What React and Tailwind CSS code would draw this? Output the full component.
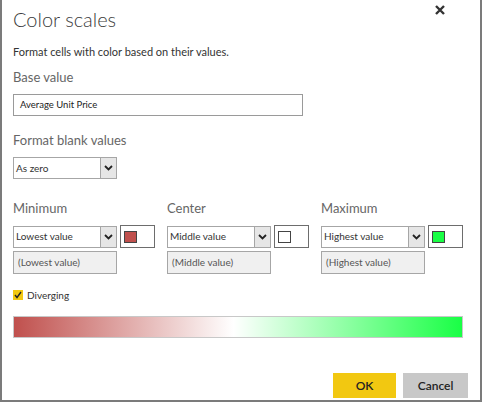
import React from "react";

const font = { fontFamily: 'Lato, "Open Sans", sans-serif' };

const Chevron = () => (
  <svg width="9" height="6" viewBox="0 0 9 6">
    <path d="M1 1 L4.5 4.5 L8 1" fill="none" stroke="#222" strokeWidth="1.8" />
  </svg>
);

const Select = ({ value }) => (
  <div className="flex h-[22px] w-[104px] items-stretch border border-[#a6a6a6] bg-white">
    <div className="flex flex-1 items-center pl-[2px] text-[10px] text-[#333]">{value}</div>
    <div className="flex w-[16px] items-center justify-center border-l border-[#a6a6a6] bg-[#e6e6e6]">
      <Chevron />
    </div>
  </div>
);

const Swatch = ({ color }) => (
  <div className="flex h-[23px] w-[35px] items-center border-[1.5px] border-[#6d6d6d] bg-white pl-[3px]">
    <div className="h-[12px] w-[13px] border border-[#444]" style={{ background: color }} />
  </div>
);

const Column = ({ label, value, color }) => (
  <div className="flex w-[154px] shrink-0 flex-col">
    <div className="h-[18px] text-[13px] leading-[18px] text-[#666]">{label}</div>
    <div className="mt-[8px] flex items-center gap-[3px]">
      <Select value={value} />
      <Swatch color={color} />
    </div>
    <div className="mt-[3px] flex h-[23px] w-[104px] items-center border border-[#a6a6a6] bg-[#f0f0f0] pl-[4px] text-[10px] text-[#555]">
      ({value})
    </div>
  </div>
);

export default function App() {
  return (
    <div style={font} className="flex h-[402px] w-[482px] flex-col border-b-2 border-l-2 border-r-2 border-[#7b7b7b] bg-white pl-[11px] pr-[8px]">
      <div className="flex items-start justify-between">
        <div className="mt-[5px] h-[28px] text-[20px] font-light leading-[28px] text-[#3a3a3a]">Color scales</div>
        <svg className="mt-[5px] mr-[27px]" width="10" height="10" viewBox="0 0 10 10">
          <path d="M1 1 L9 9 M9 1 L1 9" stroke="#333" strokeWidth="2.4" />
        </svg>
      </div>
      <div className="mt-[11px] h-[16px] text-[11px] leading-[16px] text-[#333]">Format cells with color based on their values.</div>
      <div className="mt-[8px] h-[18px] text-[13px] leading-[18px] text-[#666]">Base value</div>
      <div className="mt-[8px] flex h-[22px] w-[290px] items-center border border-[#9a9a9a] pl-[6px] text-[9.5px] text-[#222]">
        Average Unit Price
      </div>
      <div className="mt-[15px] h-[18px] text-[13px] leading-[18px] text-[#666]">Format blank values</div>
      <div className="mt-[8px]">
        <Select value="As zero" />
      </div>
      <div className="mt-[20px] flex">
        <Column label="Minimum" value="Lowest value" color="#c0504d" />
        <Column label="Center" value="Middle value" color="#ffffff" />
        <Column label="Maximum" value="Highest value" color="#19ff45" />
      </div>
      <div className="mt-[15px] flex h-[12px] items-center gap-[4px]">
        <div className="flex h-[10px] w-[10px] items-center justify-center bg-[#f2c811]">
          <svg width="8" height="8" viewBox="0 0 8 8">
            <path d="M1 4 L3 6.5 L7 1" fill="none" stroke="#222" strokeWidth="1.4" />
          </svg>
        </div>
        <span className="text-[10px] text-[#333]">Diverging</span>
      </div>
      <div className="mt-[15px] h-[22px] w-[450px] border border-[#c8c8c8] bg-[linear-gradient(to_right,#c0504d_0%,#ffffff_49%,#19ff45_100%)]" />
      <div className="mt-[35px] flex justify-end gap-[7px] pr-[4px]">
        <button className="h-[25px] w-[63px] bg-[#f2c811] text-[12px] font-semibold text-[#222]">OK</button>
        <button className="h-[25px] w-[65px] bg-[#c8c8c8] text-[12px] font-semibold text-[#222]">Cancel</button>
      </div>
    </div>
  );
}
